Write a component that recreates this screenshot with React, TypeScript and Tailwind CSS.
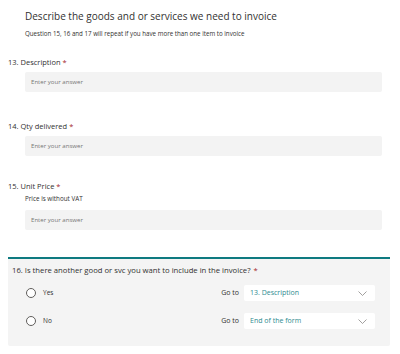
import React from "react";

const font = { fontFamily: '"Open Sans", "Noto Sans", sans-serif' };

function Label({ num, text }: { num: string; text: string }) {
  return (
    <div className="h-[12px] flex items-center text-[7.5px] text-[#323130] pl-[8px]">
      <span>{num}. {text}</span>
      <span className="text-[#a4262c] ml-[2px]">*</span>
    </div>
  );
}

function Answer({ className = "" }: { className?: string }) {
  return (
    <div className={"ml-[25px] mr-[18px] h-[20px] bg-[#f3f3f3] rounded-[2px] flex items-center pl-[6px] text-[6.1px] text-[#767676] " + className}>
      Enter your answer
    </div>
  );
}

function Chevron() {
  return (
    <svg width="9" height="5" viewBox="0 0 9 5" fill="none">
      <path d="M0.5 0.5 L4.5 4.5 L8.5 0.5" stroke="#8a8886" strokeWidth="0.8" />
    </svg>
  );
}

function Choice({ label, target, className = "" }: { label: string; target: string; className?: string }) {
  return (
    <div className={"h-[16px] flex items-center " + className}>
      <div className="ml-[18px] w-[10px] h-[10px] rounded-full border border-[#605e5c] bg-white" />
      <span className="ml-[7px] text-[6.5px] text-[#323130]">{label}</span>
      <span className="ml-auto text-[7px] text-[#323130]">Go to</span>
      <div className="ml-[5px] mr-[15px] w-[131px] h-[16px] bg-white rounded-[2px] flex items-center pl-[6px] pr-[8px]">
        <span className="text-[7px] text-[#2e8b90]">{target}</span>
        <span className="ml-auto flex"><Chevron /></span>
      </div>
    </div>
  );
}

export default function App() {
  return (
    <div className="w-[400px] h-[354px] bg-white overflow-hidden" style={font}>
      <div className="pl-[25px]">
        <div className="h-[24px] mt-[4px] flex items-center text-[10px] text-[#323130]">
          Describe the goods and or services we need to invoice
        </div>
        <div className="h-[10px] mt-[1px] flex items-center text-[6.2px] text-[#323130]">
          Question 15, 16 and 17 will repeat if you have more than one item to invoice
        </div>
      </div>

      <div className="mt-[18px]">
        <Label num="13" text="Description" />
        <Answer className="mt-[3px]" />
      </div>

      <div className="mt-[29px]">
        <Label num="14" text="Qty delivered" />
        <Answer className="mt-[3px]" />
      </div>

      <div className="mt-[25px]">
        <Label num="15" text="Unit Price" />
        <div className="mt-[1px] h-[10px] flex items-center pl-[25px] text-[6.3px] text-[#323130]">
          Price is without VAT
        </div>
        <Answer className="mt-[6px]" />
      </div>

      <div className="mt-[27px] mx-[8px] w-[382px] h-[89px] bg-[#f4f4f4] border-t-2 border-[#0e7a80] rounded-b-[2px]">
        <div className="pt-[6px] pl-[4px] h-[18px] flex items-center text-[7.7px] text-[#323130]">
          <span>16. Is there another good or svc you want to include in the invoice?</span>
          <span className="text-[#a4262c] ml-[3px]">*</span>
        </div>
        <Choice label="Yes" target="13. Description" className="mt-[8px]" />
        <Choice label="No" target="End of the form" className="mt-[12px]" />
      </div>
    </div>
  );
}
